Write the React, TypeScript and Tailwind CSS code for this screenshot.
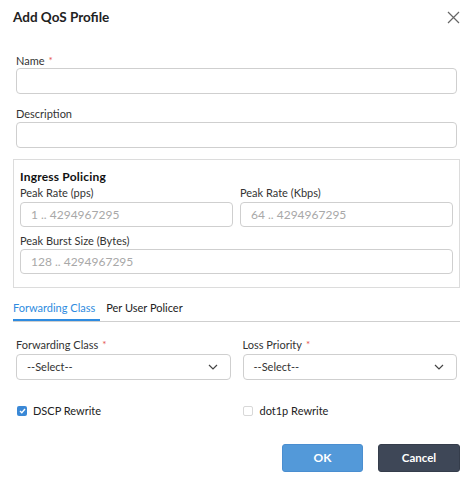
import React from 'react';

const Label: React.FC<{ text: string; required?: boolean }> = ({ text, required }) => (
    <div className="h-[16px] flex items-center text-[11px] text-[#333] leading-none">
        {text}
        {required && <span className="ml-[4px] text-[#e5534b] text-[10px]">*</span>}
    </div>
);

const TextInput: React.FC<{ placeholder?: string; short?: boolean }> = ({ placeholder, short }) => (
    <div className={`${short ? 'h-[25px]' : 'h-[26px]'} rounded-[4px] border border-[#cfcfcf] bg-white flex items-center px-[10px] text-[12px] text-[#a8a8a8]`}>
        {placeholder}
    </div>
);

const Select: React.FC = () => (
    <div className="h-[26px] rounded-[4px] border border-[#cfcfcf] bg-white flex items-center justify-between pl-[10px] pr-[12px] text-[11px] text-[#333]">
        <span>--Select--</span>
        <svg width="10" height="6" viewBox="0 0 10 6" fill="none" stroke="#444" strokeWidth="1.2">
            <path d="M1 1l4 4 4-4" />
        </svg>
    </div>
);

export default function App() {
    return (
        <div className="w-[476px] h-[481px] bg-white pl-[13px] pr-[16px] pt-[7px]" style={{ fontFamily: 'Lato, "Open Sans", sans-serif' }}>
            <div className="flex items-center justify-between h-[20px]">
                <h1 className="text-[13.5px] font-bold text-[#222]">Add QoS Profile</h1>
                <svg width="13" height="13" viewBox="0 0 13 13" stroke="#666" strokeWidth="1.2" className="mt-[1px]">
                    <path d="M1 1l11 11M12 1L1 12" />
                </svg>
            </div>

            <div className="px-[3px] mt-[25px]">
                <Label text="Name" required />
                <TextInput />
                <div className="mt-[11px]"><Label text="Description" /></div>
                <div className="mt-[1px]"><TextInput /></div>
            </div>

            <div className="mt-[11px] border border-[#dcdcdc] px-[6px] pt-[9px] pb-[13px]">
                <div className="h-[15px] flex items-center text-[12px] font-bold text-[#111] tracking-[0.2px]">Ingress Policing</div>
                <div className="grid grid-cols-2 gap-x-[7px]">
                    <div>
                        <Label text="Peak Rate (pps)" />
                        <div className="mt-[2px]"><TextInput short placeholder="1 .. 4294967295" /></div>
                    </div>
                    <div>
                        <Label text="Peak Rate (Kbps)" />
                        <div className="mt-[2px]"><TextInput short placeholder="64 .. 4294967295" /></div>
                    </div>
                </div>
                <div className="mt-[5px]"><Label text="Peak Burst Size (Bytes)" /></div>
                <div className="mt-[1px]"><TextInput short placeholder="128 .. 4294967295" /></div>
            </div>

            <div className="mt-[12px] flex border-b border-[#cfcfcf] text-[11px]">
                <div className="h-[21px] leading-[16px] pb-[3px] border-b-2 border-[#2e8be0] text-[#2e8be0] pr-[5px] -mb-px">Forwarding Class</div>
                <div className="h-[21px] leading-[16px] text-[#222] pl-[6px]">Per User Policer</div>
            </div>

            <div className="px-[3px] mt-[14px] grid grid-cols-2 gap-x-[12px]">
                <div>
                    <Label text="Forwarding Class" required />
                    <div className="mt-[2px]"><Select /></div>
                </div>
                <div>
                    <Label text="Loss Priority" required />
                    <div className="mt-[2px]"><Select /></div>
                </div>
            </div>

            <div className="px-[4px] mt-[23px] h-[16px] grid grid-cols-2 gap-x-[12px] text-[11px] text-[#222]">
                <div className="flex items-center gap-[6px]">
                    <span className="w-[10px] h-[10px] rounded-[2px] bg-[#3a88d6] flex items-center justify-center">
                        <svg width="7" height="6" viewBox="0 0 7 6" fill="none" stroke="white" strokeWidth="1.4">
                            <path d="M1 3l1.8 1.8L6 1" />
                        </svg>
                    </span>
                    DSCP Rewrite
                </div>
                <div className="flex items-center gap-[7px]">
                    <span className="w-[10px] h-[10px] rounded-[2px] border border-[#d8d8d8]" />
                    dot1p Rewrite
                </div>
            </div>

            <div className="mt-[25px] flex justify-end gap-[15px]">
                <button className="w-[81px] h-[28px] rounded-[3px] bg-[#5399d9] border border-[#4a8ed0] text-white text-[12px] font-bold">OK</button>
                <button className="w-[82px] h-[28px] rounded-[3px] bg-[#3e4757] border border-[#353d4b] text-white text-[11.5px] font-bold">Cancel</button>
            </div>
        </div>
    );
}
